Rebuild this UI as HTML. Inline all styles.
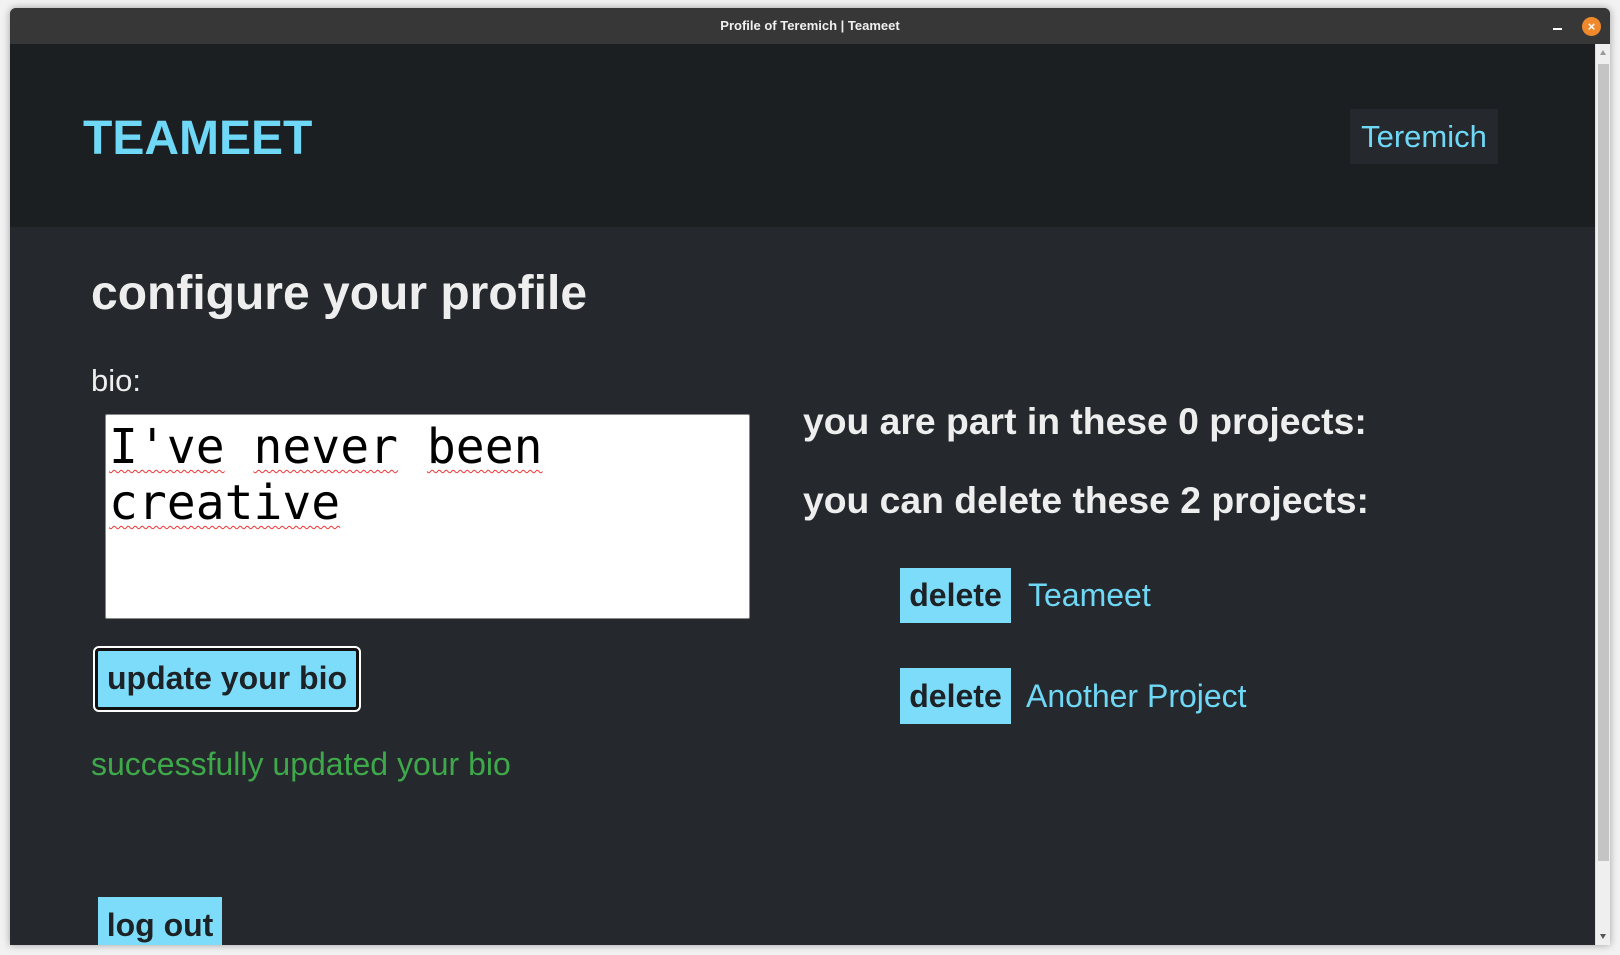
<!DOCTYPE html>
<html><head><meta charset="utf-8"><style>
*{margin:0;padding:0;box-sizing:border-box}
body{width:1620px;height:955px;background:#f2f2f2;position:relative;overflow:hidden;font-family:"Liberation Sans",sans-serif}
.win{position:absolute;left:10px;top:8px;width:1600px;height:937px;background:#25292d;box-shadow:0 0 8px rgba(0,0,0,.35);overflow:hidden;border-radius:6px 6px 0 0}
.tb{position:absolute;left:0;top:0;width:100%;height:36px;background:#373737;color:#f0f0f0;font-size:13px;font-weight:bold;text-align:center;line-height:36px}
.min{position:absolute;left:1543px;top:20px;width:9px;height:2px;background:#fff}
.close{position:absolute;left:1572px;top:9px;width:19px;height:19px;border-radius:50%;background:#f0892b;color:#fff;font-size:13px;line-height:19px;text-align:center;font-weight:bold}
.hdr{position:absolute;left:0;top:36px;width:1585px;height:183px;background:#1c1f22}
.logo{position:absolute;left:73px;top:67px;font-size:48px;font-weight:bold;color:#6fd8f6;line-height:56px}
.user{position:absolute;left:1340px;top:65px;width:148px;height:55px;background:#25292d;color:#6fd8f6;font-size:31px;line-height:55px;text-align:center}
.sb{position:absolute;left:1585px;top:36px;width:15px;height:901px;background:#efefef;border-left:1px solid #ddd}
.thumb{position:absolute;left:2px;top:20px;width:11px;height:797px;background:#c4c4c4}
.au{position:absolute;left:4px;top:6px;width:0;height:0;border-left:3px solid transparent;border-right:3px solid transparent;border-bottom:5px solid #999}
.ad{position:absolute;left:4px;bottom:6px;width:0;height:0;border-left:3px solid transparent;border-right:3px solid transparent;border-top:5px solid #555}
.m{position:absolute;color:#eeeeee}
h1{position:absolute;left:81px;top:258px;font-size:48px;line-height:56px;color:#eee}
.bio{left:81px;top:355px;font-size:31px}
.ta{position:absolute;left:95px;top:406px;width:645px;height:205px;background:#fff;border:1px solid #888;border-radius:2px;font-family:"DejaVu Sans Mono",monospace;font-size:48px;line-height:56px;color:#000;padding:4px 3px 0}
.ta span{text-decoration:underline wavy #e33 1px;text-underline-offset:6px}
.btn{position:absolute;background:#7ddcfa;color:#1d2226;font-weight:bold;font-size:32px;text-align:center}
.upd{left:85px;top:640px;width:264px;height:62px;border:3px solid #111;outline:2px solid #fff;border-radius:4px;line-height:54px}
.ok{left:81px;top:738px;font-size:32px;color:#3ea84a}
h3{position:absolute;font-size:37.3px;color:#eee;left:793px;line-height:44px}
.lnk{position:absolute;color:#6fd8f6;font-size:32px;line-height:56px}
</style></head><body>
<div class="win">
<div class="tb">Profile of Teremich | Teameet</div>
<div class="min"></div><div class="close">×</div>
<div class="hdr"><div class="logo">TEAMEET</div><div class="user">Teremich</div></div>
<h1>configure your profile</h1>
<div class="m bio">bio:</div>
<div class="ta"><span>I've</span> <span>never</span> <span>been</span> <span>creative</span></div>
<div class="btn upd">update your bio</div>
<div class="m ok">successfully updated your bio</div>
<div class="btn" style="left:88px;top:889px;width:124px;height:60px;line-height:56px">log out</div>
<h3 style="top:391px">you are part in these 0 projects:</h3>
<h3 style="top:470px">you can delete these 2 projects:</h3>
<div class="btn" style="left:890px;top:560px;width:111px;height:55px;line-height:55px">delete</div>
<div class="lnk" style="left:1018px;top:559px">Teameet</div>
<div class="btn" style="left:890px;top:660px;width:111px;height:56px;line-height:56px">delete</div>
<div class="lnk" style="left:1016px;top:660px">Another Project</div>
<div class="sb"><div class="au"></div><div class="thumb"></div><div class="ad"></div></div>
</div>
</body></html>
